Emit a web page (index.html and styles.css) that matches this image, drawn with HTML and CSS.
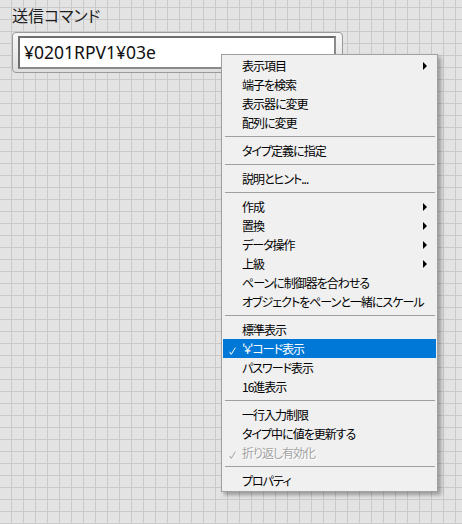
FILE: index.html
```html
<!DOCTYPE html>
<html lang="ja">
<head>
<meta charset="utf-8">
<title>送信コマンド</title>
<link rel="stylesheet" href="styles.css">
</head>
<body>
<div class="panel">
  <div class="label">送信コマンド</div>
  <div class="frame"><div class="field">¥0201RPV1¥03e</div></div>
</div>

<div class="menu">
  <div class="item"><span class="check"></span><span class="text">表示項目</span><span class="arrow"><svg width="4" height="8" viewBox="0 0 4 8"><polygon points="0,0 4,4 0,8"/></svg></span></div>
  <div class="item"><span class="check"></span><span class="text">端子を検索</span></div>
  <div class="item"><span class="check"></span><span class="text">表示器に変更</span></div>
  <div class="item"><span class="check"></span><span class="text">配列に変更</span></div>
  <div class="sep"></div>
  <div class="item"><span class="check"></span><span class="text">タイプ定義に指定</span></div>
  <div class="sep"></div>
  <div class="item"><span class="check"></span><span class="text">説明とヒント...</span></div>
  <div class="sep"></div>
  <div class="item"><span class="check"></span><span class="text">作成</span><span class="arrow"><svg width="4" height="8" viewBox="0 0 4 8"><polygon points="0,0 4,4 0,8"/></svg></span></div>
  <div class="item"><span class="check"></span><span class="text">置換</span><span class="arrow"><svg width="4" height="8" viewBox="0 0 4 8"><polygon points="0,0 4,4 0,8"/></svg></span></div>
  <div class="item"><span class="check"></span><span class="text">データ操作</span><span class="arrow"><svg width="4" height="8" viewBox="0 0 4 8"><polygon points="0,0 4,4 0,8"/></svg></span></div>
  <div class="item"><span class="check"></span><span class="text">上級</span><span class="arrow"><svg width="4" height="8" viewBox="0 0 4 8"><polygon points="0,0 4,4 0,8"/></svg></span></div>
  <div class="item"><span class="check"></span><span class="text">ペーンに制御器を合わせる</span></div>
  <div class="item"><span class="check"></span><span class="text">オブジェクトをペーンと一緒にスケール</span></div>
  <div class="sep"></div>
  <div class="item"><span class="check"></span><span class="text">標準表示</span></div>
  <div class="item selected"><span class="check"><svg width="7" height="8" viewBox="0 0 7 8"><path d="M0.6 4.8 L2.2 7.4 L6.4 0.6"/></svg></span><span class="text">'¥'コード表示</span></div>
  <div class="item"><span class="check"></span><span class="text">パスワード表示</span></div>
  <div class="item"><span class="check"></span><span class="text">16進表示</span></div>
  <div class="sep"></div>
  <div class="item"><span class="check"></span><span class="text">一行入力制限</span></div>
  <div class="item"><span class="check"></span><span class="text">タイプ中に値を更新する</span></div>
  <div class="item disabled"><span class="check"><svg width="7" height="8" viewBox="0 0 7 8"><path d="M0.6 4.8 L2.2 7.4 L6.4 0.6"/></svg></span><span class="text">折り返し有効化</span></div>
  <div class="sep"></div>
  <div class="item"><span class="check"></span><span class="text">プロパティ</span></div>
</div>
</body>
</html>
```

FILE: styles.css
```css
html, body {
  margin: 0;
  padding: 0;
}

body {
  width: 462px;
  height: 524px;
  overflow: hidden;
  background-color: #e3e3e3;
  background-image:
    linear-gradient(to right, #c9c9c9 1px, transparent 1px),
    linear-gradient(to bottom, #c9c9c9 1px, transparent 1px);
  background-size: 12px 12px;
  background-position: 11px 7px;
  font-family: "Noto Sans CJK JP", "Noto Sans", sans-serif;
  position: relative;
}

.panel {
  padding: 5px 0 0 12px;
}

.label {
  font-size: 16px;
  line-height: 20px;
  height: 20px;
  color: #1e1e1e;
  font-feature-settings: "palt";
  margin-bottom: 7px;
}

.frame {
  box-sizing: border-box;
  width: 331px;
  height: 41px;
  border: 1px solid #9a9a9a;
  border-radius: 4px;
  padding: 3px 6px 3px 5px;
  background: linear-gradient(to bottom, #f7f7f7 0%, #ececec 50%, #dedede 100%);
}

.field {
  box-sizing: border-box;
  height: 33px;
  border: 2px solid;
  border-color: #6e6e6e #8a8a8a #8a8a8a #6e6e6e;
  background: #ffffff;
  padding-left: 4px;
  font-family: "Noto Sans", sans-serif;
  font-size: 17.5px;
  line-height: 29px;
  color: #111111;
  white-space: nowrap;
}

.menu {
  position: absolute;
  left: 221px;
  top: 54px;
  width: 217px;
  box-sizing: border-box;
  background: #f0f0f0;
  border: 1px solid #a0a0a0;
  padding: 1px;
  box-shadow: 3px 3px 4px rgba(0, 0, 0, 0.32);
  font-size: 12px;
  color: #000000;
  font-feature-settings: "palt";
}

.item {
  display: flex;
  align-items: center;
  height: 19px;
  line-height: 19px;
  padding: 0 9px 0 5px;
  white-space: nowrap;
}

.check {
  display: block;
  box-sizing: border-box;
  width: 14px;
  height: 19px;
  padding: 8px 0 0 1px;
  flex: none;
}

.check svg {
  display: block;
}

.check path {
  fill: none;
  stroke: #000000;
  stroke-width: 1;
}

.text {
  flex: 1;
  letter-spacing: -1px;
}

.arrow {
  display: block;
  height: 8px;
  flex: none;
}

.arrow svg {
  display: block;
}

.arrow polygon {
  fill: #000000;
}

.selected {
  background: #0078d7;
  color: #ffffff;
}

.selected .check path {
  stroke: #ffffff;
}

.disabled {
  color: #a3a3a3;
  text-shadow: 1px 1px 0 #ffffff;
}

.disabled .check path {
  stroke: #a3a3a3;
}

.sep {
  height: 1px;
  margin: 4px 1px 4px 2px;
  background: #a0a0a0;
}
```
